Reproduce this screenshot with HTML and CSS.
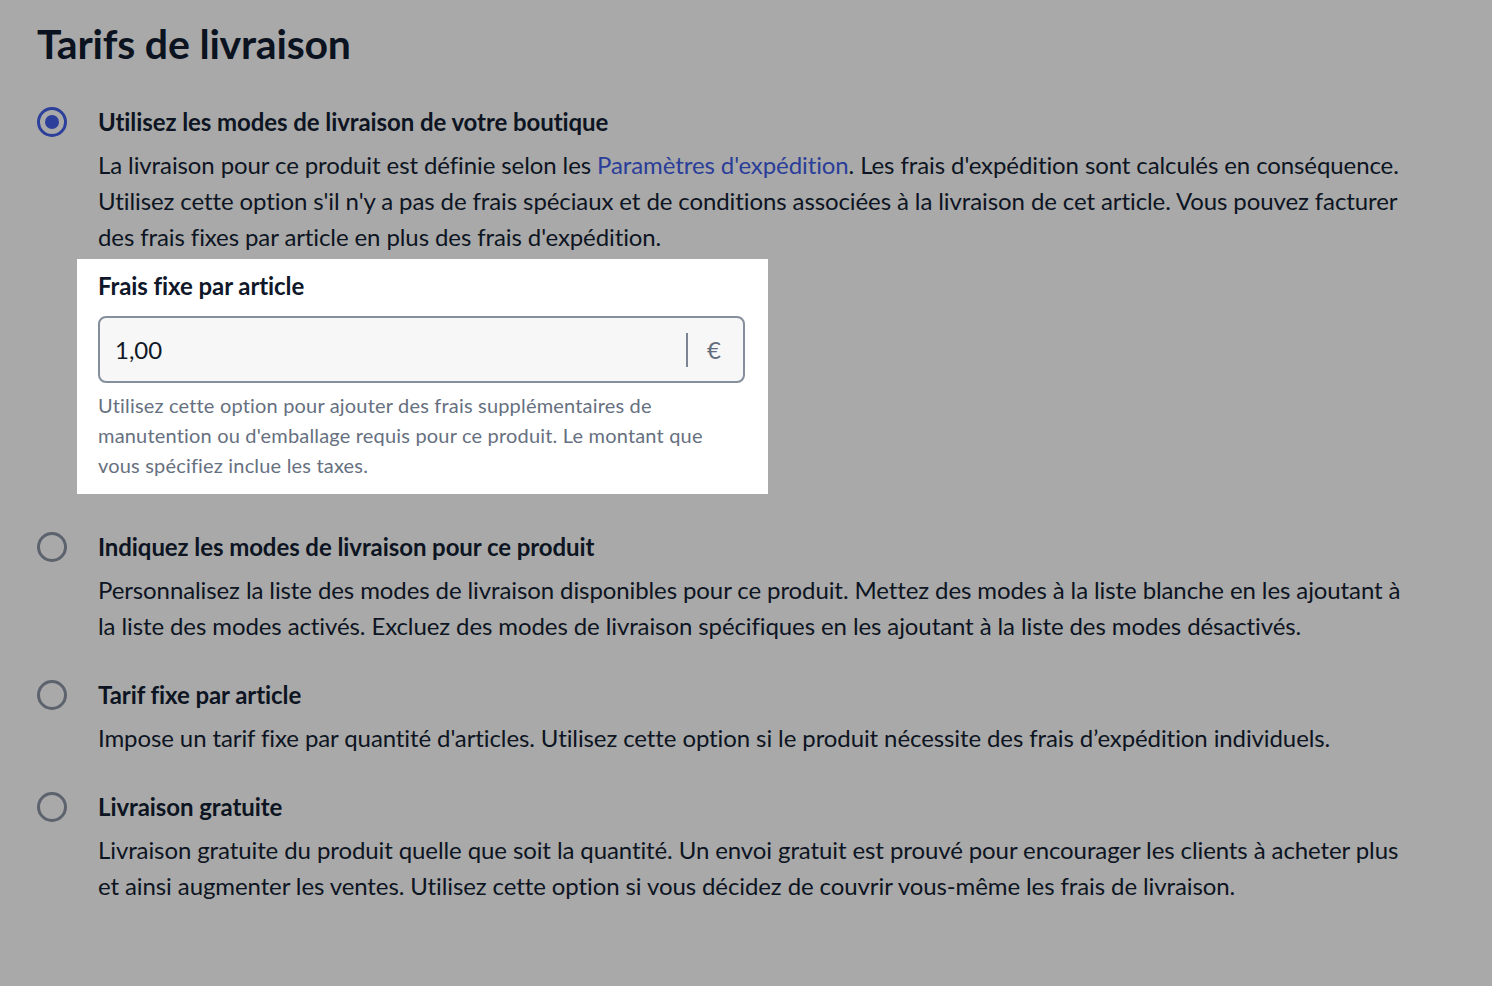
FILE: index.html
```html
<!DOCTYPE html>
<html lang="fr">
<head>
<meta charset="utf-8">
<title>Tarifs de livraison</title>
<link rel="stylesheet" href="styles.css">
</head>
<body>
<main class="page">
  <h1 class="title">Tarifs de livraison</h1>

  <div class="options">
    <div class="option">
      <span class="radio radio-checked"></span>
      <div class="option-body">
        <div class="option-title">Utilisez les modes de livraison de votre boutique</div>
        <p class="option-text">La livraison pour ce produit est définie selon les <a class="link" href="#">Paramètres d'expédition</a>. Les frais d'expédition sont calculés en conséquence. Utilisez cette option s'il n'y a pas de frais spéciaux et de conditions associées à la livraison de cet article. Vous pouvez facturer des frais fixes par article en plus des frais d'expédition.</p>
        <div class="panel">
          <label class="field-label" for="fee">Frais fixe par article</label>
          <div class="input">
            <input id="fee" class="input-field" type="text" value="1,00">
            <span class="input-divider"></span>
            <span class="input-suffix">€</span>
          </div>
          <p class="help">Utilisez cette option pour ajouter des frais supplémentaires de manutention ou d'emballage requis pour ce produit. Le montant que vous spécifiez inclue les taxes.</p>
        </div>
      </div>
    </div>

    <div class="option option-spaced">
      <span class="radio"></span>
      <div class="option-body">
        <div class="option-title">Indiquez les modes de livraison pour ce produit</div>
        <p class="option-text">Personnalisez la liste des modes de livraison disponibles pour ce produit. Mettez des modes à la liste blanche en les ajoutant à la liste des modes activés. Excluez des modes de livraison spécifiques en les ajoutant à la liste des modes désactivés.</p>
      </div>
    </div>

    <div class="option">
      <span class="radio"></span>
      <div class="option-body">
        <div class="option-title">Tarif fixe par article</div>
        <p class="option-text">Impose un tarif fixe par quantité d'articles. Utilisez cette option si le produit nécessite des frais d’expédition individuels.</p>
      </div>
    </div>

    <div class="option">
      <span class="radio"></span>
      <div class="option-body">
        <div class="option-title">Livraison gratuite</div>
        <p class="option-text">Livraison gratuite du produit quelle que soit la quantité. Un envoi gratuit est prouvé pour encourager les clients à acheter plus et ainsi augmenter les ventes. Utilisez cette option si vous décidez de couvrir vous-même les frais de livraison.</p>
      </div>
    </div>
  </div>
</main>
</body>
</html>
```

FILE: styles.css
```css
* { box-sizing: border-box; }

html, body {
  margin: 0;
  padding: 0;
  background: #a9a9a9;
}

body {
  font-family: Lato, "Open Sans", "Liberation Sans", sans-serif;
  color: #0d1422;
}

.page {
  padding: 18px 72px 40px 37px;
}

.title {
  margin: 0;
  font-size: 41px;
  line-height: 52px;
  font-weight: 700;
  color: #0b1220;
  letter-spacing: -0.2px;
}

.options {
  margin-top: 34px;
  display: flex;
  flex-direction: column;
  gap: 33px;
}

.option {
  display: flex;
  align-items: flex-start;
  gap: 31px;
}

.option-spaced {
  margin-top: 2px;
}

.radio {
  flex: none;
  width: 30px;
  height: 30px;
  margin-top: 3px;
  border: 3px solid #5c636d;
  border-radius: 50%;
  display: flex;
  align-items: center;
  justify-content: center;
}

.radio-checked {
  border-color: #2b3f9b;
}

.radio-checked::after {
  content: "";
  width: 14px;
  height: 14px;
  border-radius: 50%;
  background: #2b3f9b;
}

.option-body {
  flex: 1;
  min-width: 0;
}

.option-title {
  font-size: 24px;
  line-height: 36px;
  font-weight: 700;
  color: #0d1422;
  letter-spacing: -0.08px;
}

.option-text {
  margin: 7px 0 0;
  font-size: 24px;
  line-height: 36px;
  color: #0d1422;
  letter-spacing: -0.1px;
}

.link {
  color: #2a3d99;
  text-decoration: none;
}

.panel {
  margin: 4px 0 0 -21px;
  width: 691px;
  background: #ffffff;
  padding: 11px 23px 14px 21px;
}

.field-label {
  display: block;
  font-size: 24px;
  line-height: 32px;
  font-weight: 700;
  color: #0f1729;
  letter-spacing: -0.08px;
}

.input {
  margin-top: 14px;
  height: 67px;
  border: 2px solid #858e9c;
  border-radius: 8px;
  background: #f7f7f8;
  display: flex;
  align-items: center;
  padding: 0 22px 0 15px;
}

.input-field {
  flex: 1;
  min-width: 0;
  border: 0;
  background: transparent;
  font-family: inherit;
  font-size: 24px;
  color: #111827;
  padding: 0;
  outline: none;
}

.input-divider {
  flex: none;
  width: 2px;
  height: 34px;
  background: #7c8594;
  margin-right: 19px;
}

.input-suffix {
  font-size: 24px;
  color: #636c7a;
}

.help {
  margin: 7px 0 0;
  font-size: 20px;
  line-height: 30px;
  color: #667080;
  letter-spacing: 0.18px;
}
```
